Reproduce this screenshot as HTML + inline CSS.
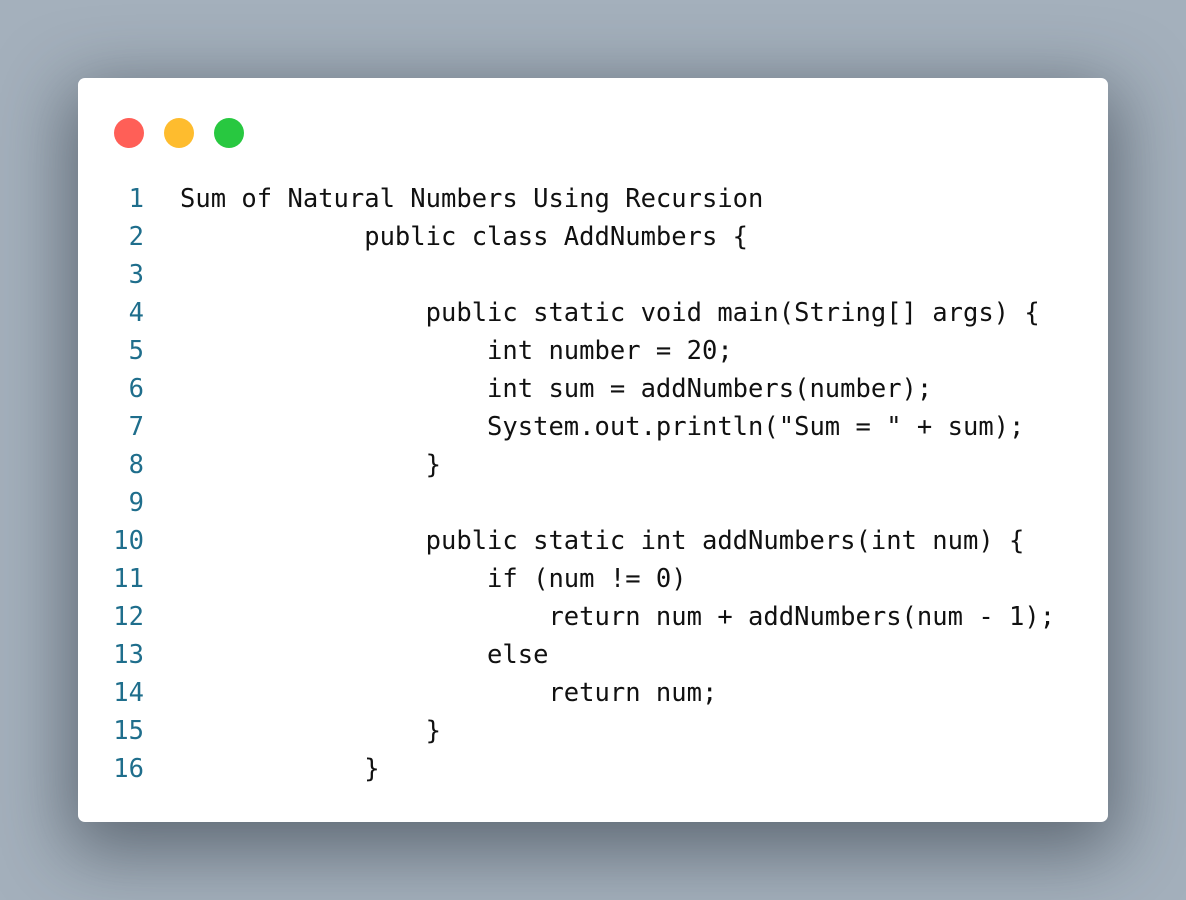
<!DOCTYPE html>
<html><head><meta charset="utf-8"><style>
html,body{margin:0;padding:0}
body{width:1186px;height:900px;background:#a4b0bc;position:relative;overflow:hidden}
.card{position:absolute;left:78px;top:78px;width:1030px;height:744px;background:#fff;border-radius:7px;box-shadow:0 20px 70px 10px rgba(40,50,60,0.55)}
.dot{position:absolute;top:40px;width:30px;height:30px;border-radius:50%}
.code{position:absolute;top:102px;left:0;font-family:"DejaVu Sans Mono","Liberation Mono",monospace;font-size:25.5px;line-height:38px;color:#111;white-space:pre}
.ln{display:inline-block;width:66px;text-align:right;color:#1f6e8c;margin-right:36px}
</style></head><body>
<div class="card">
<div class="dot" style="left:36px;background:#ff5f57"></div>
<div class="dot" style="left:86px;background:#febc2e"></div>
<div class="dot" style="left:136px;background:#28c840"></div>
<div class="code"><span class="ln">1</span>Sum of Natural Numbers Using Recursion
<span class="ln">2</span>            public class AddNumbers {
<span class="ln">3</span>
<span class="ln">4</span>                public static void main(String[] args) {
<span class="ln">5</span>                    int number = 20;
<span class="ln">6</span>                    int sum = addNumbers(number);
<span class="ln">7</span>                    System.out.println("Sum = " + sum);
<span class="ln">8</span>                }
<span class="ln">9</span>
<span class="ln">10</span>                public static int addNumbers(int num) {
<span class="ln">11</span>                    if (num != 0)
<span class="ln">12</span>                        return num + addNumbers(num - 1);
<span class="ln">13</span>                    else
<span class="ln">14</span>                        return num;
<span class="ln">15</span>                }
<span class="ln">16</span>            }</div>
</div>
</body></html>
